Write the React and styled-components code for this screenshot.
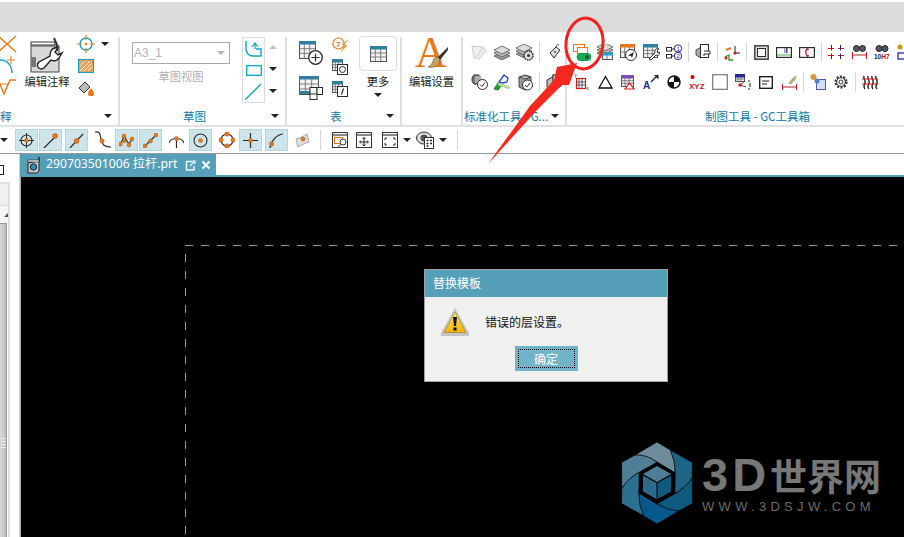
import React from "react";
import styled, { createGlobalStyle } from "styled-components";

const O = "#e8791a", C = "#0fa3c6", K = "#2b2b2b", G = "#8c8c8c", R = "#d01818", N = "#26269a", T = "#2f7f9d";

const tbl = (x, y, w, h, head = T, c = 3, r = 3) => {
  const lines = [];
  for (let i = 1; i < c; i++) lines.push(<path key={"c" + i} d={`M${x + (w * i) / c} ${y}V${y + h}`} stroke="#666" strokeWidth=".8" />);
  for (let i = 1; i < r; i++) lines.push(<path key={"r" + i} d={`M${x} ${y + 3 + ((h - 3) * i) / r}H${x + w}`} stroke="#666" strokeWidth=".8" />);
  return (
    <g>
      <rect x={x + 0.5} y={y + 0.5} width={w} height={h} fill="#f2f2f2" stroke="#555" />
      {lines}
      <rect x={x} y={y} width={w + 1} height="3.5" fill={head} />
    </g>
  );
};
const dot = (x, y, r = 2.5) => <circle cx={x} cy={y} r={r} fill={O} stroke="#a85a10" strokeWidth=".5" />;
const ln = (d, s = K, w = 1.2) => <path d={d} fill="none" stroke={s} strokeWidth={w} />;
const badge = (x, y, r = 5) => (
  <g>
    <circle cx={x} cy={y} r={r} fill="#fff" stroke={K} />
    {ln(`M${x - 2.5} ${y}l2 2 3-4`, K, 1)}
  </g>
);
const stack = (x, y, s = "#9a9a9a") => (
  <g stroke="#555" strokeWidth=".8">
    <path d={`M${x} ${y + 9}l8-4 8 4-8 4z`} fill={s} />
    <path d={`M${x} ${y + 6}l8-4 8 4-8 4z`} fill="#bcbcbc" />
    <path d={`M${x} ${y + 3}l8-4 8 4-8 4z`} fill="#dcdcdc" />
  </g>
);

const ICONS = {
  cross: [17, 17, <>{ln("M-2 0L16 16M16 0L-2 16", O, 1.4)}</>],
  arcPt: [17, 20, <>{ln("M0 4C7 4 12 9 12 17", C, 1.4)}{ln("M11 0V8M7 4H15", O, 1)}</>],
  sqrtMark: [17, 18, <>{ln("M0 5L4 15L10 1H16", O, 1.4)}{ln("M0 5H8L4 15", O, 1)}</>],
  target: [18, 18, <><circle cx="9" cy="9" r="6" fill="none" stroke={C} strokeWidth="1.4" />{ln("M9 0V5M9 13V18M0 9H5M13 9H18", O, 1.2)}<circle cx="9" cy="9" r="1.3" fill={O} /></>],
  hatch: [16, 14, <><rect x=".5" y=".5" width="15" height="13" fill="#f4a25a" stroke={C} strokeWidth="1.2" />{ln("M2 12L12 2M6 12L14 4M2 7L7 2M10 12L14 8", "#fff", 1)}</>],
  paint: [16, 15, <><path d="M1 7L7 1L12 6L6 12Z" fill="#bbb" stroke="#333" /><path d="M13 7c2 3 3 4 3 5.500a3 3 0 0 1-6 0c0-1.500 1-2.500 3-5.500z" fill={O} /></>],
  editNote: [34, 36, <>
    <rect x="1" y="9" width="28" height="26" fill="#d8d8d8" stroke="#444" />
    <rect x="1" y="20" width="5" height="10" fill="#777" />
    <rect x="1" y="5" width="24" height="3" fill="#fff" stroke="#333" />
    {ln("M24 1L27 8V14", "#333", 2)}
    <path d="M8 30a4 4 0 0 0 6 1L21 23a6 6 0 0 0 8-2l3-5-4 2-3-3 3-4a6 6 0 0 0-7 3c-1 2-1 3-1 5L9 25c-1 1-2 3-1 5z" fill="#fff" stroke="#222" strokeWidth="1.4" />
  </>],
  curveArrow: [17, 17, <>{ln("M1 0V8c0 4 3 7 7 7h8V8h-5", C, 1.4)}{ln("M10 8L10 3M7 6L10 2L13 6", C, 1.2)}</>],
  rectC: [16, 11, <rect x=".7" y=".7" width="14.600" height="9.600" fill="none" stroke={C} strokeWidth="1.3" />],
  lineC: [17, 17, ln("M0 17L16 1", C, 1.3)],
  tblPlus: [24, 24, <>{tbl(0, 0, 16, 17)}<circle cx="16.500" cy="16.500" r="6.800" fill="#fff" stroke={K} strokeWidth="1.3" />{ln("M16.500 12.500V20.500M12.500 16.500H20.500", K, 1.2)}</>],
  tblSquares: [24, 24, <>{tbl(0, 0, 19, 18)}<rect x="0" y="15" width="19" height="3" fill={T} /><rect x="11" y="11.500" width="7" height="7" fill="#fff" stroke={K} /><rect x="18" y="11.500" width="5.500" height="7" fill="#fff" stroke={K} /><rect x="11" y="18" width="7" height="5.500" fill="#fff" stroke={K} /></>],
  balloon7: [17, 16, <><circle cx="6.500" cy="6.500" r="5.500" fill="#fff" stroke={O} strokeWidth="1.2" /><text x="4" y="9.500" fontSize="8" fontWeight="700" fill={O} fontFamily="Liberation Sans, sans-serif">7</text><path d="M17 2L10 7L12 9L8 16L15 9L13 7Z" fill="#d9a441" /></>],
  tblCircle: [16, 16, <>{tbl(0, 0, 10, 11)}<rect x="5.500" y="5.500" width="10" height="10" fill="#fff" stroke={K} /><circle cx="10.500" cy="10.500" r="3" fill="none" stroke={K} /></>],
  tblItalic: [16, 16, <>{tbl(0, 0, 10, 11)}<rect x="5.500" y="5.500" width="10" height="10" fill="#fff" stroke={K} />{ln("M11.500 7.500L9.500 13.500", K, 1.2)}</>],
  tblPlain: [17, 16, tbl(0, 0, 16, 15, T, 3, 3)],
  bigA: [33, 33, <>
    <text x="0" y="30" fontSize="44" fill={O} fontFamily="Liberation Serif, serif">A</text>
    <path d="M33 10L23 20l2 3 8-10z" fill="#333" />
    <path d="M23 20c-3 0-5 2-5 4s-3 5-5 6c5 1 11 0 12-7z" fill="#c9a15a" stroke="#555" strokeWidth=".6" />
  </>],
  polyFaint: [16, 15, <g stroke="#ccc" fill="#efefef"><path d="M1 1L12 2L15 6L8 14L3 13Z" /><path d="M5 12L12 3" /></g>],
  layers: [18, 15, stack(1, 2)],
  layersGear: [18, 17, <>{stack(0, 1)}<circle cx="12.500" cy="11.500" r="4.500" fill="#ddd" stroke="#333" strokeWidth="1.600" strokeDasharray="1.500 .8" /><circle cx="12.500" cy="11.500" r="1.500" fill="#333" /></>],
  tag: [13, 16, <><path d="M2 9L8 3L12 6L6 14Z" fill="#ddd" stroke="#333" />{ln("M8 3C8 1 10 0 11 1", "#333", .8)}<circle cx="7" cy="8" r="1" fill="#555" /></>],
  cogCheck: [17, 16, <><path d="M1 5a3 5 0 0 1 4-4h3v9H5a3 5 0 0 1-4-5z" fill="#777" stroke="#333" /><rect x="4" y="2" width="6" height="7" fill="#aaa" />{badge(11.500, 10.500)}</>],
  flagCheck: [18, 17, <><path d="M1 15L5 9L9 11L5 16Z" fill="#2a9a2a" stroke="#184" /><path d="M6 8L11 1L15 4L14 8L10 9Z" fill="#fff" stroke="#3344cc" strokeWidth="1.300" /><path d="M6 9L17 13L16 15L5 11Z" fill="#d9d96a" stroke="#8cc" strokeWidth=".6" /></>],
  drumCheck: [15, 17, <><path d="M1 3l6-2 6 2v10l-6 3-6-3z" fill="#999" stroke="#444" /><path d="M1 3l6 2 6-2" fill="#ccc" stroke="#444" />{badge(9.500, 11)}</>],
  boxDoc: [16, 17, <><path d="M1 6l7-4 7 3v7l-7 4-7-3z" fill="#bbb" stroke="#333" /><rect x="7" y="1" width="8" height="10" fill="#fff" stroke={K} strokeWidth="1.200" />{ln("M9 4h4M9 7h2", K, 1.200)}</>],
  greenSwitch: [18, 17, <><rect x=".5" y=".5" width="11" height="7" fill="#fff" stroke={O} /><rect x="4.500" y="3.500" width="10" height="6" fill="#fff" stroke={O} />{ln("M7 10v2", K, 1)}<rect x="4" y="9.500" width="14" height="7" rx="3.500" fill="#0db14b" stroke="#096" /><circle cx="14" cy="13" r="2" fill="#444" /></>],
  layerTable: [16, 16, <>{stack(0, 0, "#7a9a7a")}{tbl(5, 8, 10, 7, "#2b9bc8", 2, 1)}</>],
  tblNav: [17, 17, <>{tbl(0, 0, 14, 13, O, 3, 2)}<circle cx="11" cy="11" r="5.500" fill="#fff" stroke={K} /><path d="M8 11.500L14 8L12 14L11 12Z" fill={K} /></>],
  tblWrench: [17, 17, <>{tbl(0, 0, 14, 13, T, 3, 3)}<path d="M6 15l6-6c-1-3 1-5 4-4l-2 2 1 2 2-1c0 3-2 4-4 3l-5 5z" fill="#fff" stroke={K} /></>],
  numbered: [17, 16, <><rect x=".5" y="3.500" width="5" height="3.500" fill="#fff" stroke={K} /><rect x=".5" y="10.500" width="5" height="3.500" fill="#fff" stroke={K} />{ln("M5.500 5H9M5.500 12H9", K, 1)}<circle cx="12" cy="4.500" r="3.700" fill="#fff" stroke={N} /><circle cx="12" cy="12" r="3.700" fill="#fff" stroke={N} /><text x="10.500" y="6.800" fontSize="6" fill={N} fontFamily="Liberation Sans, sans-serif">1</text><text x="10.500" y="14.300" fontSize="6" fill={N} fontFamily="Liberation Sans, sans-serif">2</text></>],
  cubeDoc: [16, 16, <><path d="M1 6l5-3v11l-5-3z" fill="#aaa" stroke="#555" /><rect x="5.500" y=".5" width="8" height="13" fill="#fff" stroke={K} /><path d="M9 7h6v3l-6 0v2" fill="#fff" stroke={K} /></>],
  axes: [16, 17, <>{ln("M11 9V2M11 9H16", "#222", 1)}{ln("M1 13L5 11V16H9", "#2a9a2a", 1.300)}{ln("M2 6L7 4", O, 2)}<circle cx="11" cy="9" r="1.600" fill={R} /><circle cx="2" cy="14" r="1.500" fill={R} /></>],
  sqHatch: [15, 15, <><rect x=".8" y=".8" width="13.400" height="13.400" fill="#ddd" stroke={K} strokeWidth="1.300" /><rect x="3.500" y="3.500" width="8" height="8" fill="#fff" stroke={K} /></>],
  rectMark: [16, 11, <><rect x=".6" y=".6" width="14.800" height="9.800" fill="#fff" stroke={K} strokeWidth="1.200" /><rect x="10" y="1" width="1.500" height="5" fill="#448" /><rect x="8" y="1" width="1.500" height="5" fill="#99c" />{ln("M1 8H15", "#5a5", 1)}</>],
  rectArc: [16, 11, <><rect x=".6" y=".6" width="14.800" height="9.800" fill="#fff" stroke={K} strokeWidth="1.200" />{ln("M9 1C6 3 6 7 9 10", R, 1.300)}<circle cx="9" cy="2.500" r=".8" fill={N} /><circle cx="9" cy="8.500" r=".8" fill={N} /></>],
  dashedCross: [16, 14, <>{ln("M0 3.500H16M0 10.500H16", R, 1)}{ln("M3.500 0V14M12.500 0V14", N, 1)}<rect x="6" y="0" width="4" height="14" fill="#fff" /><rect x="0" y="5.500" width="16" height="3" fill="#fff" /></>],
  binoDim: [15, 15, <><circle cx="4.500" cy="3.500" r="3" fill="#556" stroke="#222" /><circle cx="10.500" cy="3.500" r="3" fill="#556" stroke="#222" />{ln("M1 10H14", "#a22", 1)}{ln("M.5 7V14M14.500 7V14", "#a22", 1)}</>],
  bino10: [16, 15, <><circle cx="5" cy="3.500" r="3" fill="#556" stroke="#222" /><circle cx="11" cy="3.500" r="3" fill="#556" stroke="#222" /><text x="0" y="14" fontSize="6.500" fontWeight="700" fill="#222" fontFamily="Liberation Sans, sans-serif">10<tspan fill="#b00">H7</tspan></text></>],
  clipMark: [16, 16, <><circle cx="3" cy="3" r="2.500" fill="#c90" /><rect x="1" y="9" width="8" height="6" fill="#fff" stroke={N} strokeWidth="1.300" /></>],
  yTable: [16, 17, <><text x="0" y="4" fontSize="4.500" fill="#222" fontFamily="Liberation Sans, sans-serif">Y</text><rect x="2.500" y="4.500" width="9" height="10" fill="#fff" stroke={R} strokeWidth="1.200" />{ln("M5 5v9M8 5v9M3 8h8M3 11h8", "#333", .8)}<text x="12.500" y="16" fontSize="4.500" fill="#222" fontFamily="Liberation Sans, sans-serif">x</text></>],
  triangle: [15, 14, ln("M7.500 1.500L14 13H1Z", "#111", 1.300)],
  tblTri: [14, 15, <>{tbl(0, 0, 12, 11, "#7a4fb8", 3, 3)}<path d="M8.500 8L13 14H4Z" fill="#fff" stroke={R} strokeWidth="1.200" /></>],
  aArrow: [16, 16, <><text x="0" y="15" fontSize="10" fontWeight="700" fill={N} fontFamily="Liberation Sans, sans-serif">A</text>{ln("M8 8L15 1", "#222", 1.200)}<path d="M11 1H15.500V5.500Z" fill="#222" /></>],
  halfCircle: [14, 14, <><circle cx="7" cy="7" r="6" fill="#fff" stroke="#111" strokeWidth="1.500" /><path d="M7 1a6 6 0 0 1 6 6H1a6 6 0 0 0 6 6z" fill="#111" /></>],
  xyz: [17, 16, <><circle cx="3.500" cy="3" r="2" fill="#c00" /><text x="0" y="15" fontSize="8" fontWeight="700" fill="#b22" fontFamily="Liberation Sans, sans-serif">XYZ</text></>],
  blank: [16, 16, <rect x=".7" y=".7" width="14.600" height="14.600" fill="#fff" stroke="#777" strokeWidth="1.200" />],
  tblNodes: [16, 16, <>{tbl(0, 0, 9, 7, N, 3, 2)}{ln("M5 11L10 7M5 11L11 13", "#222", .8)}<circle cx="5" cy="11" r="1.700" fill={R} />{ln("M13 7h2M15 9v4M13 15h2", "#222", 1)}</>],
  noteDoc: [14, 13, <><rect x=".7" y=".7" width="12.600" height="11.600" fill="#fff" stroke="#111" strokeWidth="1.300" />{ln("M3 5H10M3 8H8", "#222", 1.200)}</>],
  brushDim: [15, 15, <><path d="M7 8L11 3L14 1L13 5L9 9Z" fill="#c9b060" stroke="#888" strokeWidth=".5" />{ln("M1 12H14", "#a22", 1)}{ln("M.5 9V15M14.500 9V15", "#a22", 1)}</>],
  gearsDoc: [16, 16, <><rect x="6.500" y="5.500" width="9" height="10" fill="#cfe0f5" stroke="#55a" /><circle cx="3.500" cy="3" r="3" fill="#d99a3a" /><circle cx="7" cy="7" r="2.500" fill="#4a80c0" /></>],
  gear: [16, 16, <><circle cx="8" cy="8" r="5.500" fill="#fff" stroke="#333" strokeWidth="2.200" strokeDasharray="2 1.450" /><circle cx="8" cy="8" r="4.300" fill="#fff" stroke="#333" /><circle cx="8" cy="8" r="2" fill="none" stroke="#333" /></>],
  redBars: [16, 16, <>{ln("M2 2C1 5 4 6 3 9S1 13 3 15M6 2C5 5 8 6 7 9S5 13 7 15M10 2C9 5 12 6 11 9S9 13 11 15M14 2C13 5 16 6 15 9S13 13 15 15", "#222", 1.400)}{ln("M0 5H16M0 10H16", "#e01818", 1.200)}</>],
  snapTarget: [15, 15, <><circle cx="7.500" cy="7.500" r="5.500" fill="none" stroke={K} strokeWidth="1.100" />{ln("M7.500 0V15M0 7.500H15", K, 1)}{dot(7.500, 7.500, 2)}</>],
  snapEnd: [15, 15, <>{ln("M1 15L12 4", K, 1.200)}{dot(12, 3, 2.500)}</>],
  snapMid: [15, 15, <>{ln("M1 15L14 1", K, 1.200)}{dot(7.500, 8, 2.500)}</>],
  snapCurve: [16, 18, <>{ln("M0 1C6 0 5 5 6 8S7 16 16 16", K, 1.200)}{dot(7, 10, 2.200)}</>],
  snapControl: [15, 15, <>{ln("M1 13L5 3L10 11L14 5", K, 1.100)}{dot(1.500, 11, 2)}{dot(5, 3, 2)}{dot(10, 12, 2)}{dot(13, 6, 2)}{dot(5.500, 8, 1.800)}</>],
  snapLine: [15, 15, <>{ln("M1 14L14 1", K, 1.200)}{dot(2, 13, 2)}{dot(7.500, 8, 2)}{dot(13, 2, 2)}</>],
  snapInter: [15, 15, <>{ln("M7.500 5V15M0 10C2 4 13 4 15 10", K, 1.200)}{dot(7.500, 5.500, 2)}</>],
  snapCircle: [15, 15, <><circle cx="7.500" cy="7.500" r="6.500" fill="none" stroke={K} strokeWidth="1.100" />{dot(7.500, 7.500, 2)}</>],
  snapQuad: [16, 16, <><circle cx="8" cy="8" r="6" fill="none" stroke={K} strokeWidth="1.100" />{dot(8, 2, 2.200)}{dot(8, 14, 2.200)}{dot(2, 8, 2.200)}{dot(14, 8, 2.200)}</>],
  snapCross: [15, 15, <>{ln("M7.500 0V15M0 7.500H15", K, 1.200)}{dot(7.500, 7.500, 2)}</>],
  snapArc: [15, 15, <>{ln("M1 15C2 8 7 2 14 1", K, 1.200)}{dot(2.500, 11, 2.200)}</>],
  snapPatch: [15, 14, <><path d="M1 6C5 5 9 3 12 1L14 9C10 10 6 12 3 14Z" fill="#ddd" stroke="#aaa" />{dot(8, 6, 2)}</>],
  viewZoom: [16, 16, <><rect x=".5" y=".5" width="15" height="15" fill="#fff" stroke="#333" />{ln("M1 3H15", "#888", 2)}<rect x="2.500" y="5.500" width="8" height="6" fill="none" stroke={O} /><circle cx="11" cy="10" r="3" fill="#fff" stroke="#333" />{ln("M9 12L6 15", "#a86", 1.500)}</>],
  viewPan: [16, 16, <><rect x=".5" y=".5" width="15" height="15" fill="#fff" stroke="#333" />{ln("M1 3H15", "#888", 2)}{ln("M8 5.500V14M4 10H12", "#222", 1)}{ln("M6.500 7L8 5.500L9.500 7M6.500 12.500L8 14L9.500 12.500M5 8.500L3.500 10L5 11.500M11 8.500L12.500 10L11 11.500", "#222", 1)}</>],
  viewFit: [16, 16, <><rect x=".5" y=".5" width="15" height="15" fill="#fff" stroke="#333" />{ln("M1 3H15", "#888", 2)}{ln("M3 8V6H5M13 8V6H11M3 11V13H5M13 11V13H11", "#222", 1)}</>],
  viewEye: [19, 18, <><ellipse cx="8" cy="7" rx="7.500" ry="6" fill="#ddd" stroke="#333" /><circle cx="8" cy="7" r="3.500" fill="#555" /><rect x="8.500" y="6.500" width="9" height="11" fill="#fff" stroke="#333" />{ln("M10.500 9.500h2M14 9.500h2M10.500 12.500h2M14 12.500h2M10.500 15h2", "#222", 1.300)}</>],
  tabCam: [15, 18, <><path d="M1 7l11-2v10l-2 2H1z" fill="#c8c8c8" stroke="#222" /><path d="M12 5V1" stroke="#222" strokeWidth="1.500" /><rect x="1" y="4" width="11" height="2" fill="#eee" stroke="#222" strokeWidth=".6" /><circle cx="6.500" cy="11" r="3.200" fill="#2f8fb0" stroke="#222" /></>],
  tabDoc: [11, 11, <>{ln("M7 1.500H1.500V10H9V6", "#eaf6fa", 1.500)}{ln("M5 6L10 1M7 1H10V4", "#eaf6fa", 1.200)}</>],
  tabClose: [10, 10, ln("M1.500 1.500L8.500 8.500M8.500 1.500L1.500 8.500", "#fff", 2)],
};

const Icon = ({ name }) => {
  const [w, h, body] = ICONS[name];
  return <svg width={w} height={h} viewBox={`0 0 ${w} ${h}`} style={{ overflow: "hidden", flex: "none" }}>{body}</svg>;
};

const Global = createGlobalStyle`
  html, body { margin: 0; padding: 0; background: #fff; }
  * { box-sizing: border-box; }
`;

const CJK = `"Noto Sans CJK SC", "Liberation Sans", sans-serif`;

const Page = styled.div`
  position: relative;
  width: 904px;
  height: 537px;
  overflow: hidden;
  display: flex;
  flex-direction: column;
  padding-top: 2px;
  background: #fff;
  font-family: ${CJK};
`;
const TitleStrip = styled.div`
  height: 30px;
  flex: none;
  background: #dcdcdc;
`;
const Ribbon = styled.div`
  display: flex;
  flex: none;
  height: 95px;
  padding-top: 1px;
  border-bottom: 2px solid #e2e2e2;
`;
const Group = styled.section`
  position: relative;
  flex: none;
  width: ${(p) => p.$w}px;
  display: flex;
  flex-direction: column;
  overflow: hidden;
  &::after {
    content: "";
    display: ${(p) => (p.$last ? "none" : "block")};
    position: absolute;
    right: 0;
    top: 4px;
    bottom: 0;
    width: 2px;
    background: #dfdfdf;
  }
`;
const GroupBody = styled.div`
  display: flex;
  flex-direction: ${(p) => p.$dir || "row"};
  height: 76px;
  flex: none;
  padding-left: ${(p) => p.$pl || 0}px;
  padding-top: ${(p) => p.$pt || 0}px;
`;
const GroupFoot = styled.div`
  display: flex;
  align-items: center;
  justify-content: space-between;
  height: 14px;
  padding-left: ${(p) => p.$pl || 0}px;
  padding-right: 7px;
`;
const GroupLabel = styled.span`
  font-size: ${(p) => p.$fs || 11.5}px;
  line-height: 14px;
  color: #0d7aa3;
  white-space: nowrap;
`;
const Caret = styled.i`
  display: block;
  flex: none;
  width: 0;
  height: 0;
  margin: 0 ${(p) => p.$mx ?? 1}px;
  border-left: 4px solid transparent;
  border-right: 4px solid transparent;
  border-top: 4px solid ${(p) => p.$c || "#222"};
`;
const CaretUp = styled(Caret)`
  border-top: 0;
  border-bottom: 4px solid #c4c4c4;
`;
const Column = styled.div`
  flex: none;
  display: flex;
  flex-direction: column;
  align-items: center;
  width: ${(p) => p.$w}px;
  margin-left: ${(p) => p.$ml || 0}px;
  padding-top: ${(p) => p.$pt || 0}px;
`;
const Cell = styled.div`
  display: flex;
  align-items: center;
  justify-content: center;
  width: 100%;
  height: ${(p) => p.$h || 22}px;
  flex: none;
`;
const BigButton = styled.div`
  flex: none;
  display: flex;
  flex-direction: column;
  align-items: center;
  width: ${(p) => p.$w}px;
  margin-left: ${(p) => p.$ml || 0}px;
  padding-top: 4px;
`;
const BigIcon = styled.div`
  height: 37px;
  display: flex;
  align-items: flex-start;
`;
const BigText = styled.span`
  font-size: 11.300px;
  line-height: 14px;
  color: #222;
  white-space: nowrap;
`;
const ComboCol = styled.div`
  width: 98px;
  flex: none;
  padding-top: 9px;
  display: flex;
  flex-direction: column;
  align-items: center;
`;
const Combo = styled.div`
  width: 100%;
  height: 22px;
  border: 1px solid #aaa;
  display: flex;
  align-items: center;
  justify-content: space-between;
  padding: 0 3px 0 1px;
  font-family: "Liberation Sans", sans-serif;
  font-size: 12px;
  color: #b4b4b4;
`;
const DimLabel = styled.span`
  margin-top: 5px;
  font-size: 11.300px;
  line-height: 14px;
  color: #b0b0b0;
`;
const Gallery = styled.div`
  flex: none;
  width: 23px;
  height: 66px;
  margin: 4px 0 0 12px;
  border: 1px solid #dcdcdc;
  display: flex;
  flex-direction: column;
`;
const MoreCol = styled.div`
  flex: none;
  width: 38px;
  margin-left: 11px;
  padding-top: 3px;
  display: flex;
  flex-direction: column;
  align-items: center;
`;
const MoreButton = styled.div`
  width: 38px;
  height: 35px;
  border: 1px solid #dcdcdc;
  border-radius: 4px;
  display: flex;
  align-items: center;
  justify-content: center;
`;
const MoreText = styled(BigText)`
  margin-top: 3px;
  margin-bottom: 5px;
`;
const IconRow = styled.div`
  display: flex;
  align-items: center;
  height: 30px;
  flex: none;
  padding-left: ${(p) => p.$pl || 0}px;
`;
const IconCell = styled.div`
  flex: none;
  width: 23px;
  display: flex;
  align-items: center;
  justify-content: center;
`;
const RowSep = styled.div`
  flex: none;
  width: 6px;
  height: 20px;
  display: flex;
  justify-content: center;
  &::before {
    content: "";
    width: 1px;
    background: #d6d6d6;
  }
`;

const Toolbar = styled.div`
  display: flex;
  align-items: center;
  flex: none;
  height: 27px;
  gap: 1px;
  border-bottom: 1px solid #999;
`;
const Tool = styled.div`
  flex: none;
  width: ${(p) => p.$w || 23}px;
  height: 22px;
  margin-left: ${(p) => p.$ml || 0}px;
  display: flex;
  align-items: center;
  justify-content: center;
  background: ${(p) => (p.$on ? "#cde5ea" : "transparent")};
  border: 1px solid ${(p) => (p.$on ? "#b3d5dc" : "transparent")};
`;
const BarSep = styled.div`
  flex: none;
  width: 1px;
  height: 20px;
  margin: ${(p) => p.$m};
  background: #d6d6d6;
`;
const Workspace = styled.div`
  flex: 1;
  display: flex;
  min-height: 0;
`;
const SidePanel = styled.aside`
  flex: none;
  width: 20px;
  display: flex;
  flex-direction: column;
  border-right: 1px solid #d0d0d0;
`;
const SideChip = styled.div`
  width: 4px;
  height: 10px;
  margin-top: 11px;
  border: 1px solid #222;
  border-left: 0;
`;
const SideBox = styled.div`
  flex: 1;
  width: 10px;
  margin-top: 7px;
  border: 2px solid #e0e0e0;
  border-left: 0;
  border-bottom: 0;
  display: flex;
  flex-direction: column;
`;
const SideHead = styled.div`
  height: 22px;
  background: #f0f0f0;
  border-bottom: 1px solid #ddd;
`;
const SideArrow = styled.div`
  height: 17px;
  display: flex;
  align-items: center;
  justify-content: flex-end;
  background: #f6f6f6;
  &::before {
    content: "";
    border-left: 4px solid transparent;
    border-bottom: 4px solid #555;
  }
`;
const SideScroll = styled.div`
  flex: 1;
  width: 7px;
  background: linear-gradient(to right, #d8d8d8, #bcbcbc);
  border-right: 1px solid #999;
  border-top: 1px solid #999;
  display: flex;
  flex-direction: column;
  align-items: center;
  padding-top: 214px;
  gap: 2px;
  span {
    width: 5px;
    height: 1px;
    background: #eee;
  }
`;
const Main = styled.div`
  flex: 1;
  display: flex;
  flex-direction: column;
  min-width: 0;
`;
const TabStrip = styled.div`
  flex: none;
  height: 23px;
  border-bottom: 2px solid #559fb9;
`;
const Tab = styled.div`
  width: 196px;
  height: 22px;
  background: #559fb9;
  display: flex;
  align-items: center;
  padding-left: 7px;
  color: #fff;
`;
const TabTitle = styled.span`
  margin-left: 4px;
  font-family: "Noto Sans", ${CJK};
  font-size: 12.200px;
  line-height: 20px;
  padding-bottom: 2px;
  white-space: nowrap;
  width: 139px;
`;
const TabAction = styled.span`
  display: flex;
  margin-left: ${(p) => p.$ml || 0}px;
`;
const Canvas = styled.div`
  position: relative;
  flex: 1;
  display: flex;
  background: #000;
  border-left: 1px solid #b0b0b0;
  min-height: 0;
`;
const SheetFrame = styled.div`
  flex: 1;
  margin: 68px 0 0 164px;
  background:
    repeating-linear-gradient(to right, #999 0 8px, transparent 8px 16px) left top / 100% 1px no-repeat,
    repeating-linear-gradient(to bottom, transparent 0 9px, #999 9px 17px) left top / 1px 100% no-repeat;
`;
const Dialog = styled.div`
  position: absolute;
  left: 403px;
  top: 92px;
  width: 244px;
  height: 113px;
  display: flex;
  flex-direction: column;
  background: #f0f0f0;
  border: 1px solid #a0a0a0;
`;
const DialogTitle = styled.div`
  height: 27px;
  flex: none;
  background: #559fb9;
  color: #fff;
  font-size: 12px;
  line-height: 26px;
  padding-left: 8px;
`;
const DialogBody = styled.div`
  display: flex;
  align-items: center;
  height: 49px;
  flex: none;
  padding-left: 15px;
`;
const DialogText = styled.span`
  margin-left: 15px;
  font-size: 12px;
  color: #111;
`;
const DialogFoot = styled.div`
  display: flex;
  justify-content: center;
`;
const OkButton = styled.div`
  width: 63px;
  height: 25px;
  padding: 3px;
  background: #73b3c9;
  color: #fff;
  font-size: 12px;
  display: flex;
  span {
    flex: 1;
    display: flex;
    align-items: center;
    justify-content: center;
    border: 1px dotted #000;
  }
`;
const Watermark = styled.div`
  position: absolute;
  left: 600px;
  top: 265px;
  display: flex;
  align-items: center;
  gap: 9px;
`;
const BrandText = styled.div`
  display: flex;
  flex-direction: column;
  color: #777;
`;
const BrandName = styled.div`
  display: flex;
  align-items: center;
  height: 42px;
  font-weight: 700;
  font-size: 37px;
  white-space: nowrap;
  b {
    font-family: "Liberation Sans", sans-serif;
    font-size: 47px;
    letter-spacing: 4px;
  }
`;
const BrandUrl = styled.div`
  margin-top: 5px;
  font-family: "Liberation Sans", sans-serif;
  font-size: 13px;
  line-height: 12px;
  letter-spacing: 4.300px;
  white-space: nowrap;
  color: #6c6c6c;
`;
const Annotation = styled.svg`
  position: absolute;
  left: 0;
  top: 0;
  pointer-events: none;
`;

const Row = ({ items, pl }) => (
  <IconRow $pl={pl}>
    {items.map((n, i) => (n === "|" ? <RowSep key={i} /> : <IconCell key={i}><Icon name={n} /></IconCell>))}
  </IconRow>
);

const Warning = () => (
  <svg width="30" height="29" viewBox="0 0 30 29">
    <defs>
      <linearGradient id="wy" x1="0" y1="0" x2="0" y2="1">
        <stop offset="0" stopColor="#ffe96a" />
        <stop offset="1" stopColor="#f2b000" />
      </linearGradient>
    </defs>
    <path d="M15 1L29 26V29H1V26Z" fill="#c4c4c4" />
    <path d="M15 5L26 25.500H4Z" fill="url(#wy)" stroke="#8a7a30" strokeWidth=".6" />
    <path d="M13 10h4l-1 9h-2z" fill="#111" />
    <rect x="13.500" y="20.500" width="3" height="3" fill="#111" />
  </svg>
);

const BLADES = ["#6f8c9c", "#1d6384", "#0f5a80", "#07588a", "#2b7090", "#4f7f96"];

const Logo = () => (
  <svg width="72" height="82" viewBox="0 0 72 82">
    {BLADES.map((fill, i) => (
      <path
        key={fill}
        d="M36 20Q26 14 14 13L36 0L49.250 7.950Q56 18 54 31Z"
        fill={fill}
        stroke="#000"
        strokeWidth=".7"
        transform={`rotate(${i * 60} 36 41)`}
      />
    ))}
    <path d="M36 20L54 30.500V51.500L36 62L18 51.500V30.500Z" fill="#000" />
    <path d="M36 24L50 32L36 40L22 32Z" fill="#4f7f98" />
    <path d="M22 33.500L35.500 41V57L22 49.500Z" fill="#2c6b8c" />
    <path d="M36.500 41L50 33.500V49.500L36.500 57Z" fill="#0f5a80" />
  </svg>
);

export default function App() {
  return (
    <Page>
      <Global />
      <TitleStrip />
      <Ribbon>
        <Group $w={120}>
          <GroupBody>
            <Column $w={17}>
              <Cell><Icon name="cross" /></Cell>
              <Cell><Icon name="arcPt" /></Cell>
              <Cell><Icon name="sqrtMark" /></Cell>
            </Column>
            <BigButton $w={50} $ml={5}>
              <BigIcon><Icon name="editNote" /></BigIcon>
              <BigText>编辑注释</BigText>
            </BigButton>
            <Column $w={20} $ml={4}>
              <Cell><Icon name="target" /></Cell>
              <Cell><Icon name="hatch" /></Cell>
              <Cell><Icon name="paint" /></Cell>
            </Column>
            <Column $w={14} $ml={2}>
              <Cell><Caret /></Cell>
            </Column>
          </GroupBody>
          <GroupFoot>
            <GroupLabel>释</GroupLabel>
            <Caret />
          </GroupFoot>
        </Group>

        <Group $w={167}>
          <GroupBody $pl={12}>
            <ComboCol>
              <Combo>A3_1<Caret $c="#b4b4b4" /></Combo>
              <DimLabel>草图视图</DimLabel>
            </ComboCol>
            <Gallery>
              <Cell $h={22}><Icon name="curveArrow" /></Cell>
              <Cell $h={20}><Icon name="rectC" /></Cell>
              <Cell $h={22}><Icon name="lineC" /></Cell>
            </Gallery>
            <Column $w={16} $pt={3}>
              <Cell><CaretUp /></Cell>
              <Cell><Caret /></Cell>
              <Cell><Caret /></Cell>
            </Column>
          </GroupBody>
          <GroupFoot $pl={63}>
            <GroupLabel>草图</GroupLabel>
            <Caret />
          </GroupFoot>
        </Group>

        <Group $w={115}>
          <GroupBody $pl={12}>
            <Column $w={24} $pt={2}>
              <Cell $h={35}><Icon name="tblPlus" /></Cell>
              <Cell $h={35}><Icon name="tblSquares" /></Cell>
            </Column>
            <Column $w={16} $ml={9} $pt={1}>
              <Cell><Icon name="balloon7" /></Cell>
              <Cell><Icon name="tblCircle" /></Cell>
              <Cell><Icon name="tblItalic" /></Cell>
            </Column>
            <MoreCol>
              <MoreButton><Icon name="tblPlain" /></MoreButton>
              <MoreText>更多</MoreText>
              <Caret />
            </MoreCol>
          </GroupBody>
          <GroupFoot $pl={43}>
            <GroupLabel>表</GroupLabel>
            <Caret />
          </GroupFoot>
        </Group>

        <Group $w={61}>
          <GroupBody>
            <BigButton $w={59}>
              <BigIcon><Icon name="bigA" /></BigIcon>
              <BigText>编辑设置</BigText>
            </BigButton>
          </GroupBody>
        </Group>

        <Group $w={104}>
          <GroupBody $dir="column" $pt={4}>
            <Row pl={4.5} items={["polyFaint", "layers", "layersGear", "|", "tag"]} />
            <Row pl={4.5} items={["cogCheck", "flagCheck", "drumCheck", "|", "boxDoc"]} />
          </GroupBody>
          <GroupFoot $pl={1}>
            <GroupLabel>标准化工具 - G...</GroupLabel>
            <Caret />
          </GroupFoot>
        </Group>

        <Group $w={337} $last>
          <GroupBody $dir="column" $pt={4}>
            <Row pl={3.5} items={["greenSwitch", "layerTable", "tblNav", "tblWrench", "numbered", "|", "cubeDoc", "|", "axes", "|", "sqHatch", "rectMark", "rectArc", "|", "dashedCross", "binoDim", "bino10", "clipMark"]} />
            <Row pl={3.5} items={["yTable", "triangle", "tblTri", "aArrow", "halfCircle", "xyz", "blank", "tblNodes", "noteDoc", "brushDim", "|", "gearsDoc", "gear", "|", "redBars"]} />
          </GroupBody>
          <GroupFoot $pl={138}>
            <GroupLabel>制图工具 - GC工具箱</GroupLabel>
          </GroupFoot>
        </Group>
      </Ribbon>

      <Toolbar>
        <Tool $w={8}><Caret $mx={0} /></Tool>
        <Tool $ml={6} $on><Icon name="snapTarget" /></Tool>
        <Tool $on><Icon name="snapEnd" /></Tool>
        <Tool $ml={2} $on><Icon name="snapMid" /></Tool>
        <Tool $ml={2}><Icon name="snapCurve" /></Tool>
        <Tool $on><Icon name="snapControl" /></Tool>
        <Tool $on><Icon name="snapLine" /></Tool>
        <Tool $ml={2}><Icon name="snapInter" /></Tool>
        <Tool $on><Icon name="snapCircle" /></Tool>
        <Tool $ml={2}><Icon name="snapQuad" /></Tool>
        <Tool $on><Icon name="snapCross" /></Tool>
        <Tool $ml={2} $on><Icon name="snapArc" /></Tool>
        <Tool $ml={2}><Icon name="snapPatch" /></Tool>
        <BarSep $m="0 6px 0 5px" />
        <Tool><Icon name="viewZoom" /></Tool>
        <Tool><Icon name="viewPan" /></Tool>
        <Tool $ml={2}><Icon name="viewFit" /></Tool>
        <Tool $w={10}><Caret $mx={0} /></Tool>
        <Tool $ml={1}><Icon name="viewEye" /></Tool>
        <Tool $w={10}><Caret $mx={0} /></Tool>
        <BarSep $m="0 0 0 8px" />
      </Toolbar>

      <Workspace>
        <SidePanel>
          <SideChip />
          <SideBox>
            <SideHead />
            <SideArrow />
            <SideScroll><span /><span /><span /><span /></SideScroll>
          </SideBox>
        </SidePanel>
        <Main>
          <TabStrip>
            <Tab>
              <Icon name="tabCam" />
              <TabTitle>290703501006 拉杆.prt</TabTitle>
              <TabAction><Icon name="tabDoc" /></TabAction>
              <TabAction $ml={5}><Icon name="tabClose" /></TabAction>
            </Tab>
          </TabStrip>
          <Canvas>
            <SheetFrame />
            <Dialog>
              <DialogTitle>替换模板</DialogTitle>
              <DialogBody>
                <Warning />
                <DialogText>错误的层设置。</DialogText>
              </DialogBody>
              <DialogFoot>
                <OkButton><span>确定</span></OkButton>
              </DialogFoot>
            </Dialog>
            <Watermark>
              <Logo />
              <BrandText>
                <BrandName><b>3D</b>世界网</BrandName>
                <BrandUrl>WWW.3DSJW.COM</BrandUrl>
              </BrandText>
            </Watermark>
          </Canvas>
        </Main>
      </Workspace>

      <Annotation width="904" height="537" viewBox="0 0 904 537">
        <ellipse cx="584.500" cy="43.500" rx="18.500" ry="25.500" fill="none" stroke="#f4201c" strokeWidth="3" transform="rotate(6 584.500 43.500)" />
        <path d="M488 164L530 106L554 80L557 67L577 63L569 85L562 85L537 110Z" fill="#f5281f" />
      </Annotation>
    </Page>
  );
}
